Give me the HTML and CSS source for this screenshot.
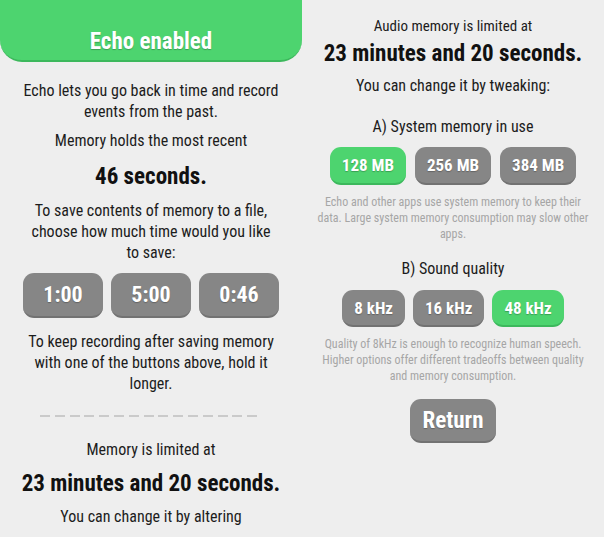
FILE: index.html
```html
<!DOCTYPE html>
<html>
<head>
<meta charset="utf-8">
<link rel="stylesheet" href="styles.css">
</head>
<body>
<div class="page">
  <section class="col left">
    <header class="banner">Echo enabled</header>
    <p class="txt intro">Echo lets you go back in time and record<br>events from the past.</p>
    <p class="txt m8">Memory holds the most recent</p>
    <p class="big m11">46 seconds.</p>
    <p class="txt m8">To save contents of memory to a file,<br>choose how much time would you like<br>to save:</p>
    <div class="row save-row">
      <button class="btn big-btn">1:00</button>
      <button class="btn big-btn">5:00</button>
      <button class="btn big-btn">0:46</button>
    </div>
    <p class="txt keep">To keep recording after saving memory<br>with one of the buttons above, hold it<br>longer.</p>
    <div class="dash"></div>
    <p class="txt lim">Memory is limited at</p>
    <p class="big m9">23 minutes and 20 seconds.</p>
    <p class="txt m7">You can change it by altering</p>
  </section>
  <section class="col right">
    <p class="txt audio">Audio memory is limited at</p>
    <p class="big m2">23 minutes and 20 seconds.</p>
    <p class="txt m6">You can change it by tweaking:</p>
    <p class="txt head">A) System memory in use</p>
    <div class="row opt-row mem-row">
      <button class="btn opt on">128 MB</button>
      <button class="btn opt">256 MB</button>
      <button class="btn opt">384 MB</button>
    </div>
    <p class="note">Echo and other apps use system memory to keep their<br>data. Large system memory consumption may slow other<br>apps.</p>
    <p class="txt head2">B) Sound quality</p>
    <div class="row opt-row khz-row">
      <button class="btn opt">8 kHz</button>
      <button class="btn opt">16 kHz</button>
      <button class="btn opt on">48 kHz</button>
    </div>
    <p class="note">Quality of 8kHz is enough to recognize human speech.<br>Higher options offer different tradeoffs between quality<br>and memory consumption.</p>
    <div class="row ret-row">
      <button class="btn ret">Return</button>
    </div>
  </section>
</div>
</body>
</html>
```
FILE: styles.css
```css
html, body {
  margin: 0;
  padding: 0;
  background: #eeeeee;
}
body {
  font-family: "Roboto Condensed", "DejaVu Sans Condensed", Roboto, sans-serif;
  color: #1c1c1c;
  width: 604px;
  height: 537px;
  overflow: hidden;
}
.page {
  display: grid;
  grid-template-columns: 302px 302px;
}
.col {
  display: flex;
  flex-direction: column;
  align-items: center;
  text-align: center;
}
p { margin: 0; }
.banner {
  align-self: stretch;
  box-sizing: border-box;
  height: 62px;
  padding-top: 28px;
  line-height: 28px;
  font-size: 23px;
  font-weight: 700;
  color: #fff;
  background: #4dd46f;
  border-bottom: 2px solid #3cb85c;
  border-radius: 0 0 22px 22px;
  text-shadow: 0 1px 1px rgba(0,0,0,0.25);
}
.txt {
  font-size: 16px;
  line-height: 21px;
  white-space: nowrap;
}
.big {
  font-size: 23px;
  font-weight: 700;
  line-height: 30px;
  color: #111;
  white-space: nowrap;
}
.intro { margin-top: 18px; }
.m2 { margin-top: 2px; }
.m6 { margin-top: 6px; }
.m7 { margin-top: 7px; }
.m8 { margin-top: 8px; }
.m9 { margin-top: 9px; }
.m11 { margin-top: 11px; }
.keep { margin-top: 13px; }
.lim { margin-top: 22px; }
.audio { margin-top: 16px; font-size: 15px; }
.head { margin-top: 20px; }
.head2 { margin-top: 16px; }
.row {
  display: flex;
  justify-content: center;
  gap: 8px;
}
.save-row { margin-top: 10px; }
.btn {
  font-family: inherit;
  border: 0;
  margin: 0;
  color: #fff;
  font-weight: 700;
  background: #868686;
  border-bottom: 2px solid #727272;
  border-radius: 11px;
  text-shadow: 0 1px 1px rgba(0,0,0,0.25);
  box-sizing: border-box;
  padding: 0;
}
.big-btn {
  width: 80px;
  height: 45px;
  font-size: 22px;
}
.dash {
  margin-top: 21px;
  width: 222px;
  height: 2px;
  background: repeating-linear-gradient(90deg, #cacaca 0 10px, transparent 10px 14.8px);
}
.opt {
  height: 38px;
  padding: 0 12px;
  font-size: 17px;
}
.on {
  background: #4dd46f;
  border-bottom-color: #3cb85c;
}
.mem-row { margin-top: 10px; gap: 9px; }
.khz-row { margin-top: 11px; }
.khz-row .opt { height: 37px; }
.note {
  margin-top: 9px;
  font-size: 12px;
  line-height: 16px;
  color: #a6a6a6;
  white-space: nowrap;
}
.ret-row { margin-top: 15px; }
.ret {
  height: 44px;
  padding: 0 12px;
  font-size: 23px;
}
```
